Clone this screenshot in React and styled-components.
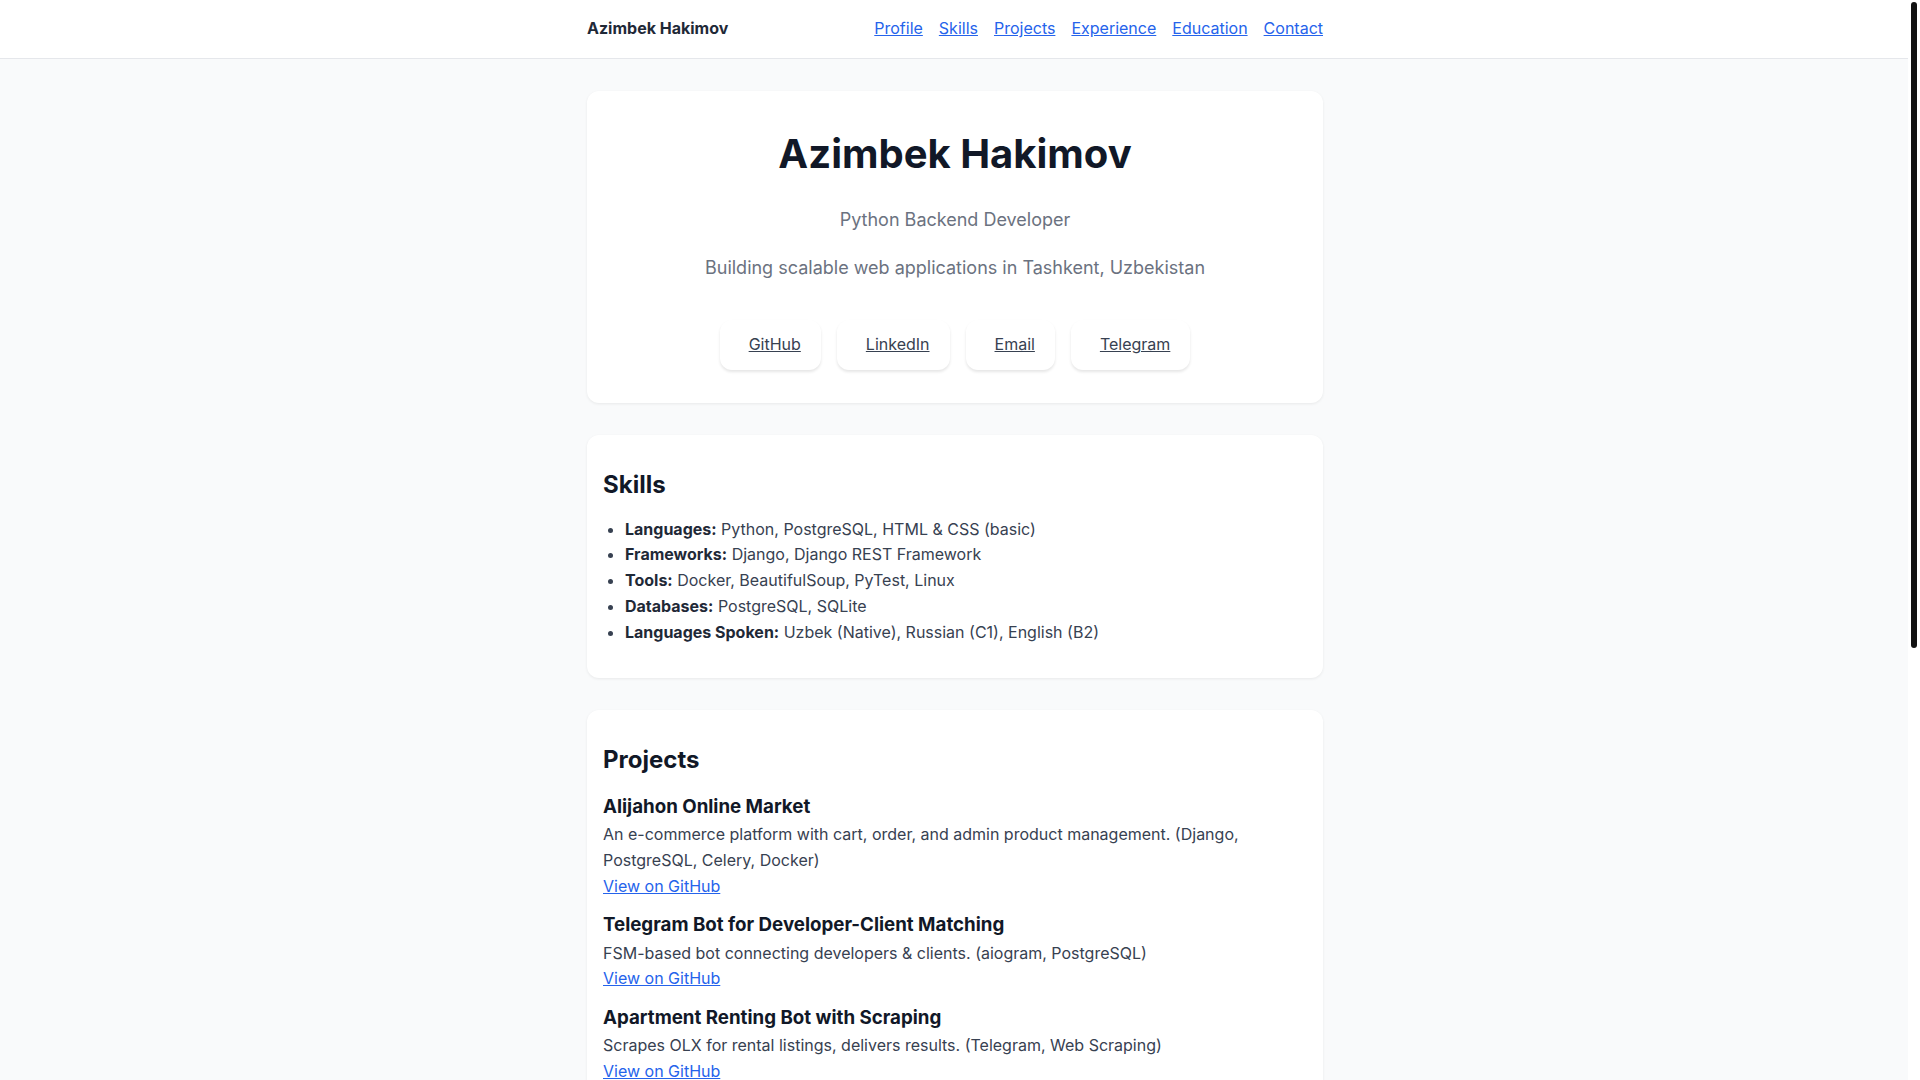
import React from 'react'
import styled, { createGlobalStyle } from 'styled-components'

const GlobalStyle = createGlobalStyle`
  * {
    box-sizing: border-box;
  }
  body {
    margin: 0;
    padding-right: 10px;
    background-color: #f9fafb;
    color: #374151;
    font-family: Inter, 'Noto Sans', 'Liberation Sans', sans-serif;
    font-size: 16px;
    line-height: 1.6;
  }
`

const skills = [
  { label: 'Languages:', value: 'Python, PostgreSQL, HTML & CSS (basic)' },
  { label: 'Frameworks:', value: 'Django, Django REST Framework' },
  { label: 'Tools:', value: 'Docker, BeautifulSoup, PyTest, Linux' },
  { label: 'Databases:', value: 'PostgreSQL, SQLite' },
  {
    label: 'Languages Spoken:',
    value: 'Uzbek (Native), Russian (C1), English (B2)',
  },
]

const projects = [
  {
    title: 'Alijahon Online Market',
    desc: 'An e-commerce platform with cart, order, and admin product management. (Django, PostgreSQL, Celery, Docker)',
  },
  {
    title: 'Telegram Bot for Developer-Client Matching',
    desc: 'FSM-based bot connecting developers & clients. (aiogram, PostgreSQL)',
  },
  {
    title: 'Apartment Renting Bot with Scraping',
    desc: 'Scrapes OLX for rental listings, delivers results. (Telegram, Web Scraping)',
  },
]

const navItems = [
  'Profile',
  'Skills',
  'Projects',
  'Experience',
  'Education',
  'Contact',
]

const socials = ['GitHub', 'LinkedIn', 'Email', 'Telegram']

const App = () => {
  return (
    <>
      <GlobalStyle />
      <Header>
        <HeaderInner>
          <Brand>Azimbek Hakimov</Brand>
          <Nav>
            {navItems.map((item) => (
              <NavLink key={item} href={`#${item.toLowerCase()}`}>
                {item}
              </NavLink>
            ))}
          </Nav>
        </HeaderInner>
      </Header>

      <Main>
        <Card id='profile' $center>
          <Title>Azimbek Hakimov</Title>
          <Subtitle>Python Backend Developer</Subtitle>
          <Tagline>
            Building scalable web applications in Tashkent, Uzbekistan
          </Tagline>
          <Socials>
            {socials.map((s) => (
              <SocialButton key={s} href='#contact'>
                {s}
              </SocialButton>
            ))}
          </Socials>
        </Card>

        <Card id='skills'>
          <SectionTitle $tight>Skills</SectionTitle>
          <SkillList>
            {skills.map((s) => (
              <li key={s.label}>
                <strong>{s.label}</strong> {s.value}
              </li>
            ))}
          </SkillList>
        </Card>

        <Card id='projects'>
          <SectionTitle>Projects</SectionTitle>
          {projects.map((p) => (
            <Project key={p.title}>
              <ProjectTitle>{p.title}</ProjectTitle>
              <ProjectDesc>{p.desc}</ProjectDesc>
              <TextLink href='#projects'>View on GitHub</TextLink>
            </Project>
          ))}
        </Card>

        <Card id='experience'>
          <SectionTitle>Experience</SectionTitle>
          <Project>
            <ProjectTitle>Backend Developer (Freelance)</ProjectTitle>
            <ProjectDesc>
              Built REST APIs and Telegram bots for small businesses, set up
              Docker deployments and PostgreSQL databases.
            </ProjectDesc>
          </Project>
          <Project>
            <ProjectTitle>Python Developer Intern</ProjectTitle>
            <ProjectDesc>
              Worked on Django projects, wrote tests with PyTest and fixed
              production bugs.
            </ProjectDesc>
          </Project>
        </Card>

        <Card id='education'>
          <SectionTitle>Education</SectionTitle>
          <ProjectDesc>Bachelor's degree in Computer Science, Tashkent</ProjectDesc>
        </Card>

        <Card id='contact'>
          <SectionTitle>Contact</SectionTitle>
          <ProjectDesc>
            Email: <TextLink href='#contact'>azimbek.hakimov@example.com</TextLink>
          </ProjectDesc>
        </Card>
      </Main>

      {/* the browser's scrollbar, drawn over the right edge */}
      <ScrollTrack>
        <ScrollThumb />
      </ScrollTrack>
    </>
  )
}

const Header = styled.header`
  background-color: white;
  border-bottom: 1px solid #e5e7eb;
`
const HeaderInner = styled.div`
  max-width: 768px;
  margin: 0 auto;
  padding: 16px;
  display: flex;
  align-items: center;
  justify-content: space-between;
`
const Brand = styled.div`
  font-weight: 700;
  color: #1f2937;
`
const Nav = styled.nav`
  display: flex;
  gap: 16px;
`
const NavLink = styled.a`
  color: #2563eb;
  text-decoration: underline;
`
const Main = styled.main`
  max-width: 768px;
  margin: 0 auto;
  padding: 32px 16px;
  display: flex;
  flex-direction: column;
  gap: 32px;
`
const Card = styled.section`
  background-color: white;
  border-radius: 12px;
  padding: 16px;
  box-shadow: 0 1px 3px rgba(0, 0, 0, 0.07);
  text-align: ${(p) => (p.$center ? 'center' : 'left')};
`
const Title = styled.h1`
  margin: 23px 0 28px;
  font-size: 40px;
  line-height: 1.2;
  font-weight: 700;
  color: #111827;
`
const Subtitle = styled.p`
  margin: 0;
  font-size: 18px;
  color: #6b7280;
`
const Tagline = styled.p`
  margin: 20px 0 0;
  font-size: 18px;
  color: #6b7280;
`
const Socials = styled.div`
  display: flex;
  justify-content: center;
  gap: 16px;
  margin: 37px 0 17px;
`
const SocialButton = styled.a`
  display: inline-block;
  padding: 12px 20px 12px 29px;
  border-radius: 12px;
  background-color: white;
  color: #374151;
  text-decoration: underline;
  box-shadow: 0 2px 3px rgba(0, 0, 0, 0.1);
`
const SectionTitle = styled.h2`
  margin: 20px 0 ${(p) => (p.$tight ? '17px' : '21px')};
  font-size: 24px;
  line-height: 1.2;
  font-weight: 700;
  color: #111827;
`
const SkillList = styled.ul`
  margin: 0 0 16px;
  padding-left: 22px;
  & li {
    line-height: 1.62;
  }
  & strong {
    color: #1f2937;
    font-weight: 700;
  }
`
const Project = styled.div`
  margin-bottom: 15px;
`
const ProjectTitle = styled.h3`
  margin: 0 0 4px;
  font-size: 18.72px;
  line-height: 1.2;
  font-weight: 700;
  color: #111827;
`
const ProjectDesc = styled.p`
  margin: 0;
`
const TextLink = styled.a`
  color: #2563eb;
  text-decoration: underline;
`
const ScrollTrack = styled.div`
  position: fixed;
  top: 0;
  right: 0;
  bottom: 0;
  width: 12px;
  background-color: white;
  padding: 2px 3px;
`
const ScrollThumb = styled.div`
  height: 60%;
  border-radius: 4px;
  background-color: #111111;
`

export default App
